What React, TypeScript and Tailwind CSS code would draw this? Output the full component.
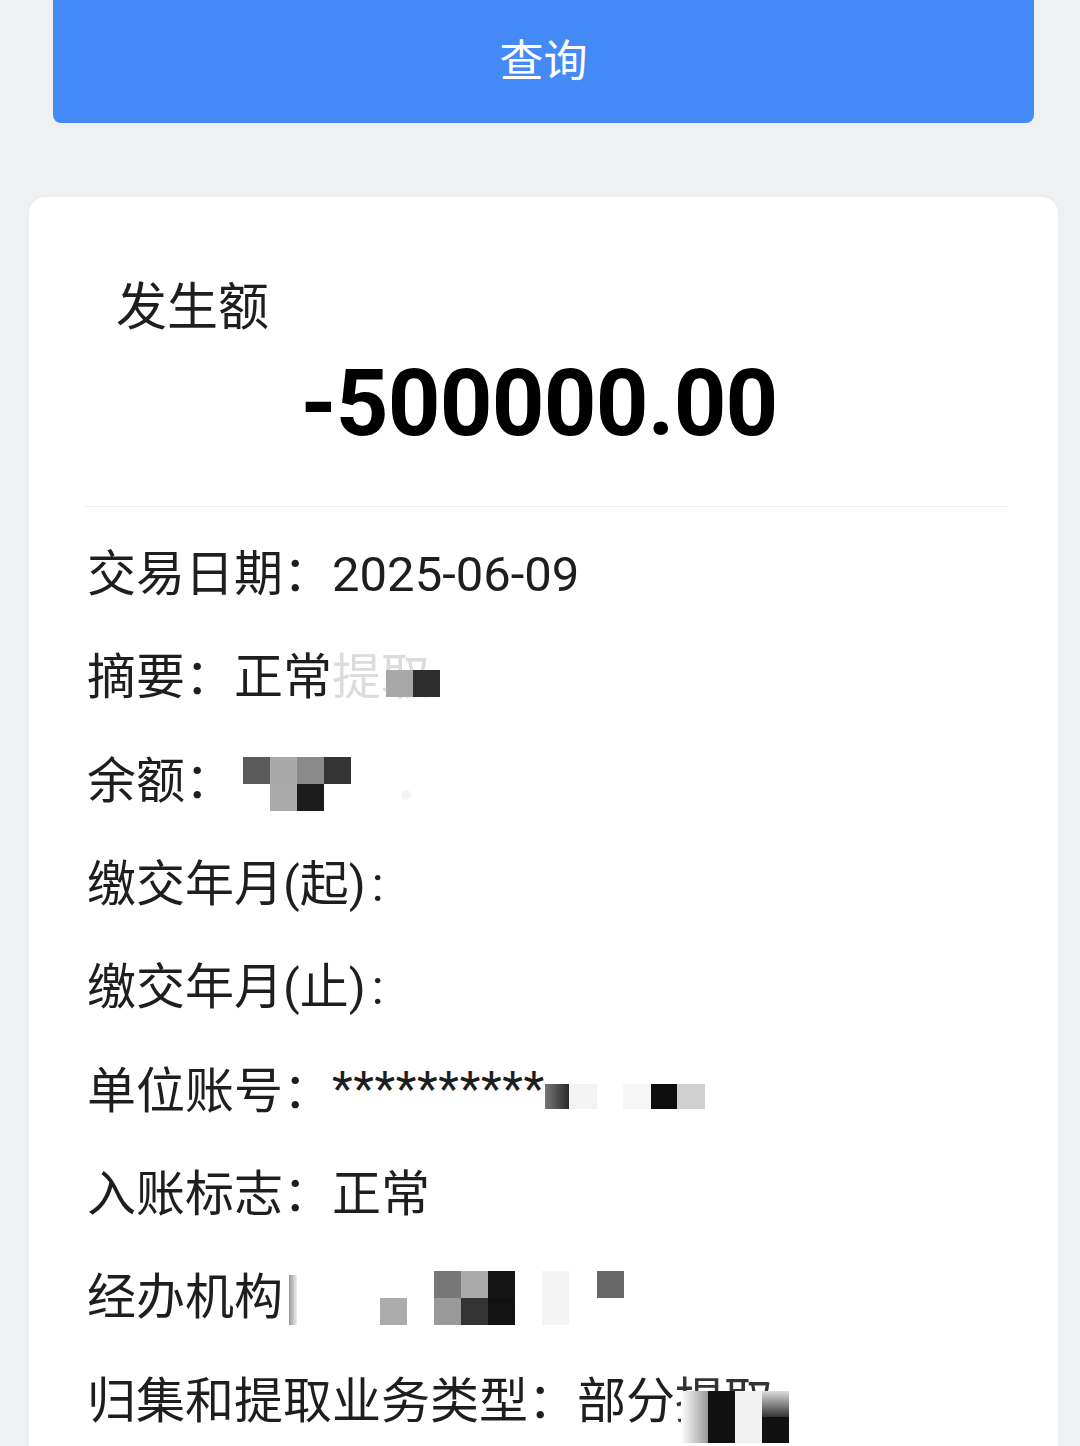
const FONT = "font-['Roboto','Noto_Sans_CJK_SC',sans-serif]";

function Blk({ c, className = "" }: { c: string; className?: string }) {
  return <div className={`h-[27px] w-[27px] ${c} ${className}`} />;
}

function Row({ children }: { children: React.ReactNode }) {
  return <div className="flex h-[103.3px] items-center text-[49px] leading-none text-[#1e1e1e]">{children}</div>;
}

export default function App() {
  return (
    <div className={`min-h-[1446px] overflow-hidden bg-[#eff0f2] ${FONT}`}>
      <button className="ml-[53px] mr-[46px] flex h-[123px] w-[981px] items-center justify-center rounded-b-[8px] bg-[#448af7] text-[44px] text-white">
        查询
      </button>

      <div className="ml-[29px] mr-[22px] mt-[74px] h-[1400px] rounded-[16px] bg-white pt-[81px] shadow-[0_0_4px_rgba(0,0,0,0.04)]">
        <div className="pl-[87px] text-[51px] leading-[60px] text-[#1e1e1e]">发生额</div>
        <div className="mt-[16px] pr-[9px] text-center text-[92px] font-bold leading-[100px] tracking-[-0.8px] text-black">
          -500000.00
        </div>
        <div className="ml-[56px] mr-[50px] mt-[52px] h-px bg-[#eeeeee]" />

        <div className="mt-[16px] pl-[58px]">
          <Row>
            交易日期：<span>2025-06-09</span>
          </Row>
          <Row>
            摘要：<span>正常</span>
            <span className="relative">
              <span className="text-[#dcdcdc]">提取</span>
              <span className="absolute left-[54px] top-[17px] flex">
                <Blk c="bg-[#a8a8a8]" />
                <Blk c="bg-[#2e2e2e]" />
              </span>
            </span>
          </Row>
          <Row>
            余额：
            <div className="ml-[9px] mt-[6px] grid grid-cols-[repeat(4,27px)]">
              <Blk c="bg-[#5a5a5a]" />
              <Blk c="bg-[#a9a9a9]" />
              <Blk c="bg-[#8a8a8a]" />
              <Blk c="bg-[#333333]" />
              <div />
              <Blk c="bg-[#aaaaaa]" />
              <Blk c="bg-[#1b1b1b]" />
              <div />
            </div>
            <div className="ml-[50px] mt-[28px] h-[10px] w-[10px] rounded-full bg-[#f4f4f4]" />
          </Row>
          <Row>
            缴交年月(起)<span className="ml-[6px]">:</span>
          </Row>
          <Row>
            缴交年月(止)<span className="ml-[6px]">:</span>
          </Row>
          <Row>
            单位账号：
            <span className="self-start pt-[26px] text-[48px] tracking-[0.6px]">**********</span>
            <div className="mt-[10px] flex">
              <div className="h-[25px] w-[24px] bg-[linear-gradient(90deg,#777,#2a2a2a)]" />
              <div className="h-[25px] w-[28px] bg-[#f3f3f3]" />
              <div className="h-[25px] w-[26px] bg-white" />
              <div className="h-[25px] w-[28px] bg-[#f6f6f6]" />
              <div className="h-[25px] w-[26px] bg-[#0e0e0e]" />
              <div className="h-[25px] w-[28px] bg-[#cfcfcf]" />
            </div>
          </Row>
          <Row>
            入账标志：<span>正常</span>
          </Row>
          <Row>
            经办机构
            <div className="ml-[6px] mt-[4px] h-[50px] w-[8px] bg-[linear-gradient(90deg,#999,#f0f0f0)]" />
            <div className="ml-[83px] mt-[28px] h-[27px] w-[27px] bg-[#ababab]" />
            <div className="ml-[27px] grid grid-cols-[repeat(3,27px)]">
              <Blk c="bg-[#777777]" />
              <Blk c="bg-[#aaaaaa]" />
              <Blk c="bg-[#151515]" />
              <Blk c="bg-[#999999]" />
              <Blk c="bg-[#333333]" />
              <Blk c="bg-[#121212]" />
            </div>
            <div className="ml-[27px] h-[54px] w-[27px] bg-[#f3f3f3]" />
            <div className="ml-[28px] mb-[27px] h-[27px] w-[27px] bg-[#676767]" />
          </Row>
          <Row>
            归集和提取业务类型：<span>部分</span>
            <span className="relative">
              <span className="text-[#333]">提取</span>
              <span className="absolute left-[6px] top-[14px] flex">
                <div className="h-[52px] w-[27px] bg-[linear-gradient(90deg,#fff,#9a9a9a)]" />
                <div className="h-[52px] w-[27px] bg-[#111]" />
                <div className="h-[52px] w-[27px] bg-[#f2f2f2]" />
                <div className="flex flex-col">
                  <div className="h-[26px] w-[27px] bg-[linear-gradient(180deg,#ddd,#333)]" />
                  <div className="h-[26px] w-[27px] bg-[#111]" />
                </div>
              </span>
            </span>
          </Row>
        </div>
      </div>
    </div>
  );
}
